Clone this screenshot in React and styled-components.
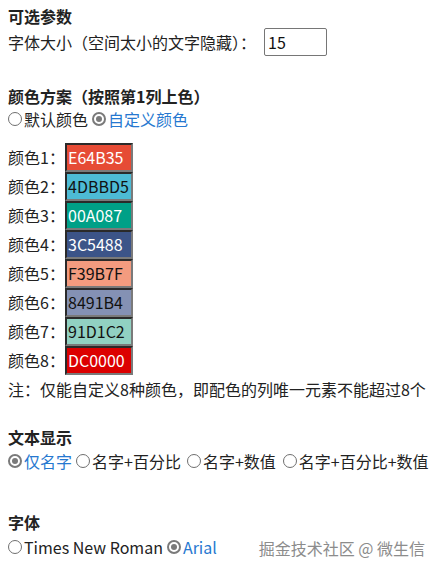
import React from "react";
import styled, { createGlobalStyle } from "styled-components";

const Global = createGlobalStyle`
  html, body { margin: 0; padding: 0; background: #fff; }
  body { font-family: "Noto Sans CJK SC", "Noto Sans", sans-serif; color: #222; }
`;

const Page = styled.div`
  position: relative;
  width: 442px;
  height: 574px;
  box-sizing: border-box;
  padding: 6px 8px 0 8px;
  font-size: 16px;
`;

const Heading = styled.div`
  font-weight: 700;
  font-size: 16px;
  line-height: 20px;
  margin-top: ${(p) => p.$mt || 0}px;
`;

const FieldRow = styled.div`
  display: flex;
  align-items: center;
  margin-top: 2px;
  height: 28px;
  line-height: 28px;
`;

const NumberInput = styled.input`
  box-sizing: border-box;
  width: 63px;
  height: 28px;
  margin-left: 8px;
  border: 1px solid #767676;
  border-radius: 2px;
  padding: 0 3px;
  font: inherit;
  font-size: 16px;
  color: #111;
  outline: none;
`;

const RadioRow = styled.div`
  display: flex;
  align-items: center;
  height: 26px;
  line-height: 26px;
  margin-top: ${(p) => p.$mt || 0}px;
  white-space: nowrap;
`;

const RadioItem = styled.label`
  display: inline-flex;
  align-items: center;
  margin-right: ${(p) => p.$gap ?? 4}px;
  color: ${(p) => (p.$checked ? "#2678d0" : "#222")};
`;

const RadioMark = styled.span`
  box-sizing: border-box;
  display: inline-flex;
  align-items: center;
  justify-content: center;
  width: 14px;
  height: 14px;
  border-radius: 50%;
  margin-right: 2px;
  margin-top: -1px;
  border: ${(p) => (p.$checked ? "2px solid #7a7a7a" : "1px solid #6f6f6f")};
  background: #fff;
  &::after {
    content: "";
    display: ${(p) => (p.$checked ? "block" : "none")};
    width: 6px;
    height: 6px;
    border-radius: 50%;
    background: #7a7a7a;
  }
`;

const SwatchList = styled.div`
  margin-top: 11px;
  display: flex;
  flex-direction: column;
`;

const SwatchRow = styled.div`
  display: flex;
  align-items: center;
  height: 29px;
`;

const SwatchLabel = styled.span`
  width: 57px;
  line-height: 29px;
`;

const Swatch = styled.div`
  box-sizing: border-box;
  width: 68px;
  height: 29px;
  border-style: solid;
  border-width: 2px;
  border-color: #2a2a2a #7a7a7a #7a7a7a #2a2a2a;
  background: ${(p) => p.$bg};
  color: ${(p) => (p.$light ? "#fff" : "#111")};
  font-size: 16px;
  line-height: 25px;
  padding-left: 1px;
  overflow: hidden;
`;

const Note = styled.div`
  margin-top: 3px;
  line-height: 22px;
  white-space: nowrap;
`;

const Watermark = styled.div`
  position: absolute;
  right: 17px;
  top: 536px;
  font-size: 16px;
  line-height: 24px;
  color: #8c8c8c;
  white-space: nowrap;
`;

function Radio({ checked, gap, children }) {
  return (
    <RadioItem $checked={checked} $gap={gap}>
      <RadioMark $checked={checked} />
      {children}
    </RadioItem>
  );
}

const colors = [
  ["E64B35", true],
  ["4DBBD5", false],
  ["00A087", true],
  ["3C5488", true],
  ["F39B7F", false],
  ["8491B4", false],
  ["91D1C2", false],
  ["DC0000", true],
];

export default function App() {
  return (
    <>
      <Global />
      <Page>
        <Heading>可选参数</Heading>
        <FieldRow>
          字体大小（空间太小的文字隐藏）：
          <NumberInput defaultValue="15" />
        </FieldRow>

        <Heading $mt={30}>颜色方案（按照第1列上色）</Heading>
        <RadioRow>
          <Radio>默认颜色</Radio>
          <Radio checked>自定义颜色</Radio>
        </RadioRow>
        <SwatchList>
          {colors.map(([hex, light], i) => (
            <SwatchRow key={hex}>
              <SwatchLabel>颜色{i + 1}：</SwatchLabel>
              <Swatch $bg={"#" + hex} $light={light}>
                {hex}
              </Swatch>
            </SwatchRow>
          ))}
        </SwatchList>
        <Note>注：仅能自定义8种颜色，即配色的列唯一元素不能超过8个</Note>

        <Heading $mt={27}>文本显示</Heading>
        <RadioRow $mt={1}>
          <Radio checked>仅名字</Radio>
          <Radio gap={6}>名字+百分比</Radio>
          <Radio gap={7}>名字+数值</Radio>
          <Radio>名字+百分比+数值</Radio>
        </RadioRow>

        <Heading $mt={38}>字体</Heading>
        <RadioRow $mt={2}>
          <Radio gap={4}>Times New Roman</Radio>
          <Radio checked>Arial</Radio>
        </RadioRow>
        <Watermark>掘金技术社区 @ 微生信</Watermark>
      </Page>
    </>
  );
}
